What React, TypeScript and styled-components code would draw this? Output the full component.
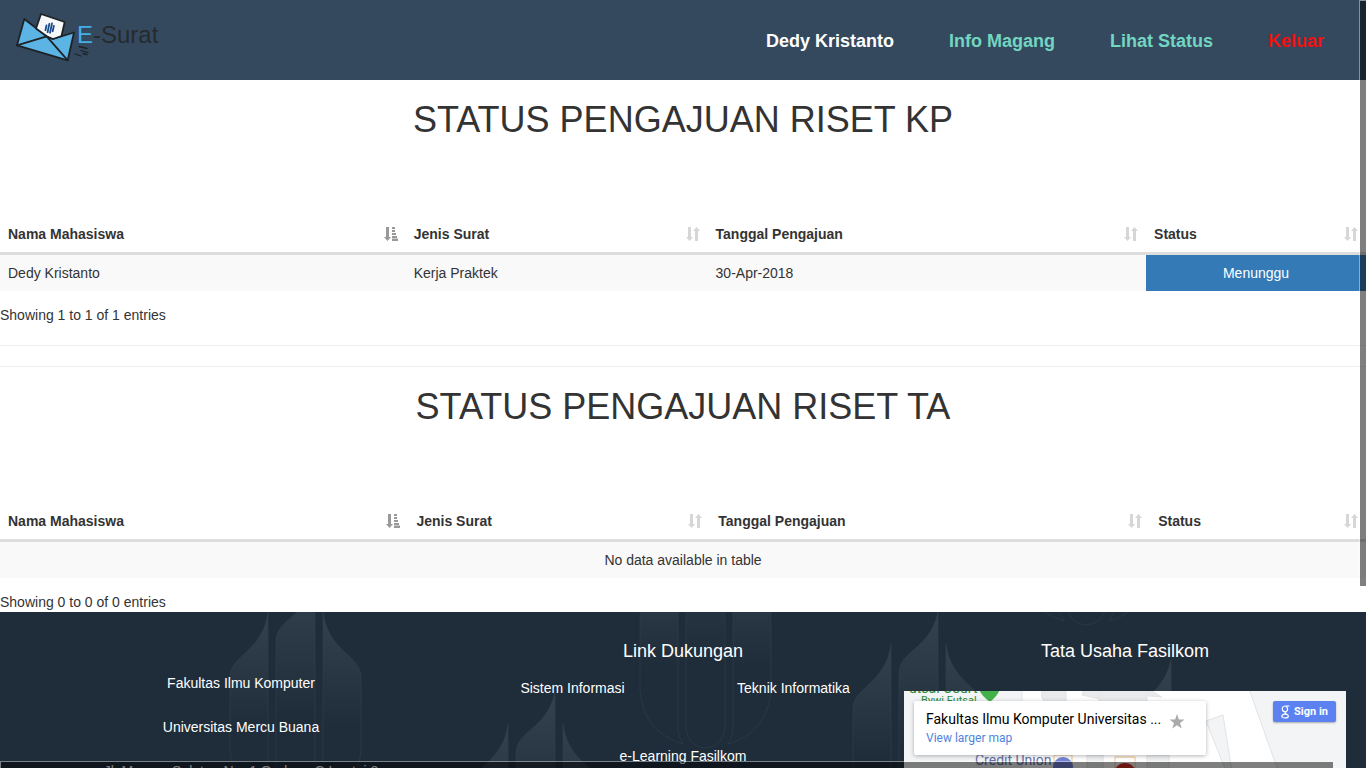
import React from 'react';
import styled, { createGlobalStyle } from 'styled-components';

const GlobalStyle = createGlobalStyle`
  *, *::before, *::after { box-sizing: border-box; }
  html, body, #root { height: 100%; }
  body {
    margin: 0;
    overflow: hidden;
    background: #fff;
    color: #333;
    font: 14px/20px "Liberation Sans", Arial, sans-serif;
  }
`;

const Page = styled.div`
  position: relative;
  height: 100%;
  overflow: hidden;
`;

const Header = styled.header`
  display: flex;
  justify-content: space-between;
  height: 80px;
  padding: 0 42px 0 16px;
  background: #34495e;
`;

const Brand = styled.a`
  display: block;
  padding-top: 10px;
  svg { display: block; }
`;

const Nav = styled.nav`
  display: flex;
  align-items: center;
  gap: 55px;
  padding-top: 2px;
`;

const NavLink = styled.a<{ $color: string }>`
  color: ${(p) => p.$color};
  font-size: 18px;
  font-weight: 700;
  line-height: 24px;
  text-decoration: none;
`;

const Title = styled.h1`
  margin: 0;
  padding: 20px 0;
  font-size: 36px;
  font-weight: 400;
  line-height: 40px;
  text-align: center;
`;

const Section = styled.section`
  padding-bottom: 20px;
`;

const Table = styled.table`
  width: 100%;
  margin-top: 56px;
  border-collapse: separate;
  border-spacing: 0;
  table-layout: fixed;
`;

const Th = styled.th`
  padding: 8px;
  border-bottom: 3px solid #ddd;
  text-align: left;
  font-weight: 700;
`;

const HeadCell = styled.div`
  display: flex;
  align-items: center;
  justify-content: space-between;
`;

const Td = styled.td<{ $center?: boolean; $active?: boolean }>`
  padding: 8px;
  background: ${(p) => (p.$active ? '#337ab7' : '#f9f9f9')};
  color: ${(p) => (p.$active ? '#fff' : '#333')};
  text-align: ${(p) => (p.$center ? 'center' : 'left')};
`;

const Info = styled.p`
  margin: 0;
  padding-top: 14px;
`;

const Rule = styled.hr`
  height: 1px;
  margin: 0;
  border: 0;
  background: #eee;

  & + & { margin-top: 20px; }
`;

const Footer = styled.footer`
  position: relative;
  height: 340px;
  margin-top: -20px;
  padding: 0 20px;
  overflow: hidden;
  background: #1f2d3a;
  color: #fff;
`;

const Pattern = styled.svg`
  position: absolute;
  top: 0;
  left: 0;
`;

const Columns = styled.div`
  position: relative;
  display: grid;
  grid-template-columns: repeat(3, 1fr);
  text-align: center;
`;

const Address = styled.address`
  display: flex;
  flex-direction: column;
  gap: 24px;
  padding-top: 61px;
  font-style: normal;
`;

const FooterTitle = styled.h4`
  margin: 0;
  padding: 29px 0 0;
  font-size: 18px;
  font-weight: 400;
  line-height: 20px;
`;

const Links = styled.div`
  display: grid;
  grid-template-columns: 1fr 1fr;
  row-gap: 48px;
  padding-top: 17px;
`;

const FooterLink = styled.a<{ $wide?: boolean }>`
  grid-column: ${(p) => (p.$wide ? '1 / -1' : 'auto')};
  color: #fff;
  text-decoration: none;
`;

const MapFrame = styled.div`
  position: relative;
  height: 240px;
  margin-top: 30px;
  overflow: hidden;
  background: #f3f4f5;
  font-family: Roboto, sans-serif;
  text-align: left;
`;

const MapDrawing = styled.svg`
  position: absolute;
  top: 0;
  left: 0;
`;

const MapCard = styled.div`
  position: absolute;
  top: 10px;
  left: 10px;
  display: flex;
  gap: 3px;
  width: 292px;
  height: 54px;
  padding: 9px 12px;
  border-radius: 2px;
  background: #fff;
  box-shadow: 0 1px 4px rgba(0, 0, 0, 0.3);
`;

const Place = styled.div`
  width: 240px;
  color: #000;
  font-size: 14px;
  font-weight: 400;
  line-height: 18px;
  white-space: nowrap;
`;

const MapLink = styled.a`
  display: block;
  color: #4d84e0;
  font-size: 12px;
  line-height: 20px;
  text-decoration: none;
`;

const SignIn = styled.button`
  position: absolute;
  top: 10px;
  right: 10px;
  display: flex;
  align-items: center;
  gap: 4px;
  height: 21px;
  padding: 0 8px;
  border: 0;
  border-radius: 2px;
  background: #5b82f0;
  box-shadow: 0 1px 2px rgba(0, 0, 0, 0.3);
  color: #fff;
  font: 700 11px/20px Roboto, sans-serif;
`;

const VerticalBar = styled.div`
  position: absolute;
  top: 0;
  right: -1px;
  width: 8px;
  height: 586px;
  border: 1px solid rgba(255, 255, 255, 0.4);
  border-bottom: 0;
  background: rgba(0, 0, 0, 0.5);
  background-clip: padding-box;
`;

const HorizontalBar = styled.div`
  position: absolute;
  bottom: 0;
  left: 0;
  right: 33px;
  height: 7px;
  border: 1px solid rgba(255, 255, 255, 0.4);
  border-width: 1px 0 0 1px;
  background: rgba(0, 0, 0, 0.5);
  background-clip: padding-box;
`;

const Logo = () => (
  <svg width="150" height="54" viewBox="16 10 150 54" role="img" aria-label="E-Surat">
    <g stroke="#1d2226" strokeWidth="1.800" strokeLinejoin="round" strokeLinecap="round">
      <path d="M24.300 19 L17 45.300 L67.700 60.300 L74 32.500 L53 39 L46.700 36.300 Z" fill="#5cb4e4" />
      <path d="M41 14 L64.700 22 L61.500 36 L53 39 L46.700 36.300 L36 28.500 Z" fill="#f7f8f9" />
      <path d="M17 45.300 L46.700 36.300 L67.700 60.300" fill="none" />
      <path d="M79 46.500 l8 2 M75 54 l6 2 M81 50.500 l7 2 M83 53.500 l4 1" strokeWidth="1.300" />
    </g>
    <g stroke="#174a8c" strokeWidth="1.800" strokeLinecap="round" transform="rotate(12 49.500 28)">
      <path d="M46 26v5M48.500 24v8.500M51 23v9.500M53.300 25v5.500" />
    </g>
    <text x="77" y="43" fontFamily="Liberation Sans, Arial, sans-serif" fontSize="24" fill="#262a2e">
      <tspan fill="#45aee6">E</tspan>-Surat
    </text>
  </svg>
);

const SortIcon = ({ active = false }: { active?: boolean }) => (
  <svg width="14" height="14" viewBox="0 0 14 14" fill={active ? '#999' : '#d6d6d6'} aria-hidden="true">
    <path d="M2 0h3v10h2l-3.500 4L0 10h2z" />
    {active ? (
      <path d="M8 0h3v2H8zM8 3h3v2H8zM8 6h4v2H8zM8 9h5v2H8zM8 11.500h6V14H8z" />
    ) : (
      <path d="M9 14h3V4h2l-3.500-4L7 4h2z" />
    )}
  </svg>
);

/* Budding flower emblem; its origin is the tip of the middle petal. */
const Flower = ({ x, y }: { x: number; y: number }) => (
  <g transform={`translate(${x} ${y})`} fill="url(#petal)" stroke="#33424e" strokeOpacity=".5">
    <path d="M-27 32 C-32 72 -65 75 -65 97 V170 Q-62 212 -22 224 Q-27 216 -27 210 Z" />
    <path d="M20 0 C12 38 -19 38 -19 62 V208 Q-17 227 0 228 Q18 227 20 208 Z" />
    <path d="M28 32 C33 72 66 75 66 97 V170 Q63 212 23 224 Q28 216 28 210 Z" />
  </g>
);

const FooterPattern = () => (
  <Pattern width="1366" height="340" aria-hidden="true">
    <defs>
      <linearGradient id="petal" x1="0" y1="0" x2="0" y2="1">
        <stop offset="0" stopColor="#34424e" />
        <stop offset=".6" stopColor="#1f2d3a" />
      </linearGradient>
    </defs>
    <Flower x={295} y={-32} />
    <Flower x={535} y={80} />
    <Flower x={705} y={-92} />
    <Flower x={918} y={0} />
    <Flower x={1086} y={-215} />
    <Flower x={1151} y={48} />
  </Pattern>
);

const MapArt = () => (
  <MapDrawing width="442" height="240" aria-hidden="true">
    <g fill="#fff" stroke="#e1e3e5">
      <path d="M118 -2 H345 L392 130 H336 L319 24 L302 30 L330 100 H118 Z" />
      <path d="M138 -2 q-2 10 4 14 h20 v-14 z M180 -2 l-2 6 l18 4 v-10 z M195 -2 h48 v14 h-48 z M244 -2 l14 8 l-14 -1 z" fill="#e9eaeb" />
      <path d="M183 64 h16 v20 h-16 z M243 64 h22 v20 h-22 z" fill="#eef0f1" />
    </g>
    <path d="M211 66h20v20h-20z M150 64h18v20h-18z" fill="none" stroke="#f3c58b" strokeWidth="1" />
    <path d="M76 0 q1 4 10 11 q8 -7 9 -11z" fill="#43b04a" />
    <circle cx="159" cy="76" r="10" fill="#7583d4" />
    <circle cx="221" cy="83" r="11" fill="#d93025" />
    <g fontFamily="Roboto, sans-serif">
      <text x="5" y="2" fontSize="14" fill="#2d8a37">utsal Court</text>
      <text x="17" y="13" fontSize="11" fill="#2d8a37">Bywi Futsal</text>
      <text x="71" y="74" fontSize="14" fill="#6670a6">Credit Union</text>
    </g>
  </MapDrawing>
);

const columnNames = ['Nama Mahasiswa', 'Jenis Surat', 'Tanggal Pengajuan', 'Status'];

const StatusTable = ({ widths, children }: { widths: string[]; children: React.ReactNode }) => (
  <Table>
    <colgroup>
      {widths.map((width, i) => (
        <col key={columnNames[i]} style={{ width }} />
      ))}
    </colgroup>
    <thead>
      <tr>
        {columnNames.map((name, i) => (
          <Th key={name} scope="col">
            <HeadCell>
              {name}
              <SortIcon active={i === 0} />
            </HeadCell>
          </Th>
        ))}
      </tr>
    </thead>
    <tbody>{children}</tbody>
  </Table>
);

export default function App() {
  return (
    <Page>
      <GlobalStyle />
      <Header>
        <Brand href="#"><Logo /></Brand>
        <Nav>
          <NavLink href="#" $color="#fff">Dedy Kristanto</NavLink>
          <NavLink href="#" $color="#72d6c1">Info Magang</NavLink>
          <NavLink href="#" $color="#72d6c1">Lihat Status</NavLink>
          <NavLink href="#" $color="#f01010">Keluar</NavLink>
        </Nav>
      </Header>
      <main>
        <Section>
          <Title>STATUS PENGAJUAN RISET KP</Title>
          <StatusTable widths={['29.7%', '22.1%', '32.1%', '16.1%']}>
            <tr>
              <Td>Dedy Kristanto</Td>
              <Td>Kerja Praktek</Td>
              <Td>30-Apr-2018</Td>
              <Td $center $active>Menunggu</Td>
            </tr>
          </StatusTable>
          <Info>Showing 1 to 1 of 1 entries</Info>
        </Section>
        <Rule />
        <Rule />
        <Section>
          <Title>STATUS PENGAJUAN RISET TA</Title>
          <StatusTable widths={['29.9%', '22.1%', '32.2%', '15.8%']}>
            <tr>
              <Td $center colSpan={4}>No data available in table</Td>
            </tr>
          </StatusTable>
          <Info>Showing 0 to 0 of 0 entries</Info>
        </Section>
      </main>
      <Footer>
        <FooterPattern />
        <Columns>
          <Address>
            <span>Fakultas Ilmu Komputer</span>
            <span>Universitas Mercu Buana</span>
            <span>Jl. Meruya Selatan No. 1 Gedung C Lantai 2</span>
          </Address>
          <div>
            <FooterTitle>Link Dukungan</FooterTitle>
            <Links>
              <FooterLink href="#">Sistem Informasi</FooterLink>
              <FooterLink href="#">Teknik Informatika</FooterLink>
              <FooterLink href="#" $wide>e-Learning Fasilkom</FooterLink>
            </Links>
          </div>
          <div>
            <FooterTitle>Tata Usaha Fasilkom</FooterTitle>
            <MapFrame>
              <MapArt />
              <MapCard>
                <Place>
                  Fakultas Ilmu Komputer Universitas ...
                  <MapLink href="#">View larger map</MapLink>
                </Place>
                <svg width="16" height="24" viewBox="0 0 16 24" fill="#aaa" aria-hidden="true">
                  <path d="M8 4l1.900 5.500h5.600l-4.500 3.500L12.700 18.500l-4.700-3.300-4.700 3.300L5 13 .5 9.500h5.600z" />
                </svg>
              </MapCard>
              <SignIn>
                <svg width="9" height="14" viewBox="0 0 9 14" fill="none" stroke="#fff" strokeWidth="1.200" aria-hidden="true">
                  <path d="M8.500 1H4.500C1.500 1 1 3 1.500 5S5 7.200 6 6 6.500 2 5 1.200M4.500 7c-1 1 0 1.500 1.500 2.500 3 2 .5 3.500-2 3.500S0 11.500 1.500 10 4 9.300 5.500 9.300" />
                </svg>
                Sign in
              </SignIn>
            </MapFrame>
          </div>
        </Columns>
      </Footer>
      <VerticalBar />
      <HorizontalBar />
    </Page>
  );
}
